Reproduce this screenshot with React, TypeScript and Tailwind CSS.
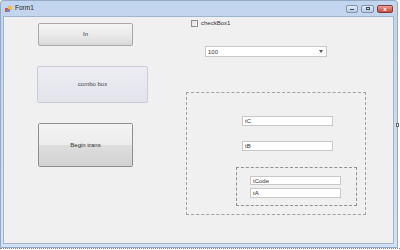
import React from "react";

const font = { fontFamily: '"Liberation Sans", Arial, sans-serif' };

function TextBox({ text, className }: { text: string; className: string }) {
  return (
    <div
      className={`bg-white border border-[#c8c8c8] flex items-center pl-[2px] text-[6px] leading-none text-[#333] shrink-0 ${className}`}
    >
      {text}
    </div>
  );
}

export default function App() {
  return (
    <div className="w-[400px] h-[250px] bg-white relative overflow-hidden" style={font}>
      <div className="w-[398px] h-[248px] flex flex-col bg-gradient-to-b from-[#c2d5ee] to-[#d3e1f3] border border-[#95a9c4] rounded-t-[3px]">
        {/* title bar */}
        <div className="h-[15px] flex items-center pl-[4px] pr-[4px] shrink-0">
          <svg width="8" height="8" viewBox="0 0 8 8" className="mr-[2px]">
            <rect x="0" y="3" width="4" height="4" fill="#d9534f" />
            <rect x="3" y="1" width="4" height="4" fill="#f0c040" />
            <rect x="2" y="4" width="3" height="3" fill="#6a8fd0" />
          </svg>
          <span className="text-[6.5px] text-[#1e1e1e] leading-none">Form1</span>
          <div className="ml-auto flex gap-[3px] items-center">
            <div className="w-[12px] h-[8px] rounded-[2px] border border-[#7f93ae] bg-gradient-to-b from-[#e4ecf7] to-[#b8c9df] flex items-center justify-center">
              <div className="w-[4px] h-[1px] bg-[#3b4a5e] mt-[2px]" />
            </div>
            <div className="w-[13px] h-[8px] rounded-[2px] border border-[#7f93ae] bg-gradient-to-b from-[#e4ecf7] to-[#b8c9df] flex items-center justify-center">
              <div className="w-[4px] h-[3px] border border-[#3b4a5e]" />
            </div>
            <div className="w-[16px] h-[8px] rounded-[2px] border border-[#8a3a34] bg-gradient-to-b from-[#e8a093] to-[#c9483a] flex items-center justify-center">
              <span className="text-[6px] leading-none text-white font-bold">x</span>
            </div>
          </div>
        </div>
        {/* body */}
        <div className="flex-1 ml-[2px] mr-[3px] mb-[3px] bg-[#f0f0f0] border border-[#9fb4cf] flex">
          {/* left column */}
          <div className="flex flex-col gap-[20px] pl-[34px] pt-[6px] w-[182px] shrink-0">
            <div className="w-[95px] h-[23px] rounded-[2px] border border-[#a8a8a8] bg-gradient-to-b from-[#f4f4f4] via-[#ebebeb] to-[#d9d9d9] flex items-center justify-center text-[6px] text-[#333]">
              In
            </div>
            <div className="-ml-[1px] w-[111px] h-[37px] rounded-[2px] border border-[#cbcbd6] bg-gradient-to-b from-[#ececf2] to-[#e3e3ec] flex items-center justify-center text-[6px] text-[#444]">
              combo box
            </div>
            <div className="relative w-[95px] h-[44px] rounded-[2px] border border-[#8f8f8f] overflow-hidden flex flex-col">
              <div className="h-1/2 bg-gradient-to-b from-[#f3f3f3] to-[#ececec]" />
              <div className="h-1/2 bg-gradient-to-b from-[#dedede] to-[#d2d2d2]" />
              <div className="absolute inset-0 flex items-center justify-center text-[6px] text-[#333]">Begin trans</div>
            </div>
          </div>

          {/* right column */}
          <div className="flex flex-col pt-[3px]">
            <div className="flex items-center gap-[3px] ml-[5px]">
              <div className="w-[7px] h-[7px] border border-[#8e8f8f] bg-gradient-to-br from-[#e0e0e0] to-[#f8f8f8]" />
              <span className="text-[6px] leading-[7px] text-[#333]">checkBox1</span>
            </div>

            <div className="ml-[19px] mt-[19px] w-[122px] h-[11px] bg-white border border-[#c8c8c8] flex items-center pl-[2px] text-[6px] leading-none text-[#333]">
              100
              <svg width="4" height="3" viewBox="0 0 4 3" className="ml-auto mr-[3px]">
                <path d="M0 0 L4 0 L2 3 Z" fill="#555" />
              </svg>
            </div>

            <div className="mt-[35px] w-[180px] h-[123px] border border-dashed border-[#a0a0a0] flex flex-col pt-[23px]">
              <TextBox text="tC" className="ml-[55px] w-[91px] h-[10px]" />
              <TextBox text="tB" className="ml-[55px] mt-[15px] w-[91px] h-[10px]" />
              <div className="ml-[49px] mt-[16px] w-[121px] h-[39px] border border-dashed border-[#909090] flex flex-col gap-[3px] pl-[13px] pt-[8px]">
                <TextBox text="tCode" className="w-[91px] h-[9px]" />
                <TextBox text="tA" className="w-[91px] h-[10px]" />
              </div>
            </div>
          </div>
        </div>
      </div>
      <div className="absolute left-0 right-0 top-[248px] border-t border-dotted border-[#888]" />
      <div className="absolute left-[396px] top-[123px] w-[3px] h-[4px] bg-white border border-[#666]" />
    </div>
  );
}
